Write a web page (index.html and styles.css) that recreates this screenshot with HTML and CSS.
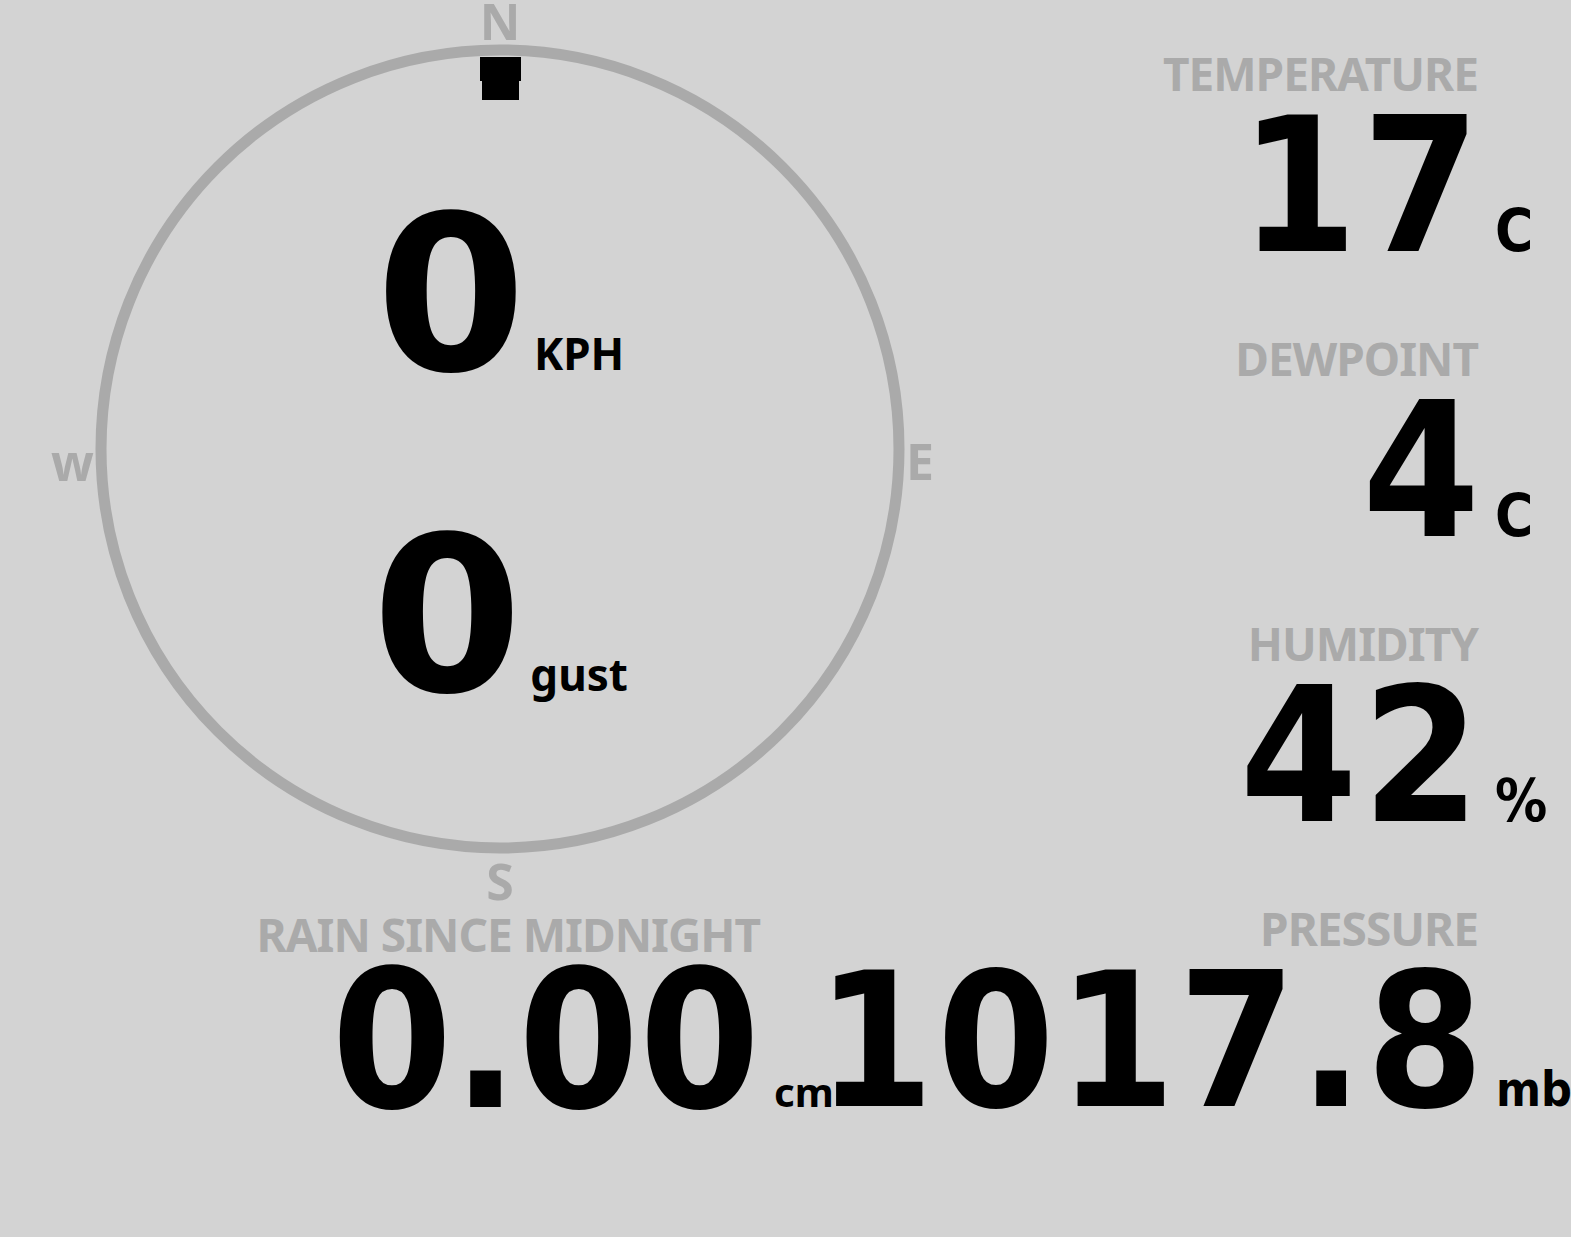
FILE: index.html
```html
<!DOCTYPE html>
<html lang="en">
<head>
    <meta charset="UTF-8">
    <meta name="viewport" content="width=device-width, initial-scale=1.0">
    <title>Weather Station</title>
    <link rel="stylesheet" href="styles.css">
</head>
<body>
    <div class="dashboard">
        <div class="compass">
            <svg class="dial" width="1000" height="900" viewBox="0 0 1000 900">
                <circle cx="500" cy="449" r="399" fill="none" stroke="#aaaaaa" stroke-width="11"/>
                <!-- wind direction pointer, 0 deg -->
                <polygon points="480,57 521,57 521,81 519,81 519,100 482,100 482,81 480,81" fill="#000"/>
            </svg>
            <span class="point point-n">N</span>
            <span class="point point-e">E</span>
            <span class="point point-s">S</span>
            <span class="point point-w">w</span>
            <div class="speeds">
                <div class="speed"><span class="speed-num">0</span><span class="speed-unit">KPH</span></div>
                <div class="speed"><span class="speed-num">0</span><span class="speed-unit">gust</span></div>
            </div>
        </div>

        <div class="reading temp">
            <div class="label">TEMPERATURE</div>
            <div class="value"><span class="num">17</span><span class="unit">C</span></div>
        </div>
        <div class="reading dew">
            <div class="label">DEWPOINT</div>
            <div class="value"><span class="num">4</span><span class="unit">C</span></div>
        </div>
        <div class="reading humidity">
            <div class="label">HUMIDITY</div>
            <div class="value"><span class="num">42</span><span class="unit">%</span></div>
        </div>
        <div class="reading rain">
            <div class="label">RAIN SINCE MIDNIGHT</div>
            <div class="value"><span class="num">0.00</span><span class="unit">cm</span></div>
        </div>
        <div class="reading pressure">
            <div class="label">PRESSURE</div>
            <div class="value"><span class="num">1017.8</span><span class="unit">mb</span></div>
        </div>
    </div>
</body>
</html>
```

FILE: styles.css
```css
body {
    margin: 0;
    background-color: #d3d3d3;
    font-family: "Noto Sans", sans-serif;
    font-weight: bold;
    color: #000;
}
.dashboard {
    display: grid;
    grid-template-columns: 1000px minmax(0, 1fr);
    grid-template-rows: repeat(4, 285px);
}

/* compass */
.compass {
    grid-column: 1;
    grid-row: 1 / span 3;
    position: relative;
}
.dial {
    position: absolute;
    top: 0;
    left: 0;
    overflow: visible;
}
.point {
    position: absolute;
    font-size: 50px;
    line-height: 50px;
    color: #aaaaaa;
}
.point-n {
    top: -4px;
    left: 0;
    width: 1000px;
    text-align: center;
}
.point-s {
    top: 856px;
    left: 0;
    width: 1000px;
    text-align: center;
}
.point-e {
    top: 436px;
    left: 906px;
}
.point-w {
    top: 437px;
    left: 51px;
}
.speeds {
    position: relative;
    display: flex;
    flex-direction: column;
    align-items: center;
    padding-top: 135px;
}
.speed {
    display: flex;
    align-items: baseline;
}
.speed-num {
    font-family: "DejaVu Sans", sans-serif;
    font-size: 216px;
    line-height: 321px;
}
.speed-unit {
    font-size: 44px;
    margin-left: 8px;
}

/* readings */
.reading {
    grid-column: 2;
    min-width: 0;
    padding-top: 50px;
}
.reading .label {
    font-size: 46px;
    line-height: 46px;
    letter-spacing: -1px;
    color: #aaaaaa;
    text-align: right;
    padding-right: 93px;
    white-space: nowrap;
}
.reading .value {
    display: flex;
    justify-content: flex-end;
    align-items: baseline;
    margin-top: 10px;
}
.reading .num {
    font-family: "DejaVu Sans Condensed", "DejaVu Sans", sans-serif;
    font-stretch: condensed;
    font-size: 188px;
    line-height: 160px;
    letter-spacing: 5px;
    white-space: nowrap;
    flex-shrink: 0;
}
.reading .unit {
    font-family: "DejaVu Sans Condensed", "DejaVu Sans", sans-serif;
    font-stretch: condensed;
    font-size: 58px;
    width: 86px;
    padding-left: 10px;
    box-sizing: border-box;
    flex-shrink: 0;
}
.temp { grid-row: 1; }
.dew { grid-row: 2; }
.humidity { grid-row: 3; }
.pressure { grid-row: 4; }
.pressure .num {
    letter-spacing: 3px;
}
.pressure .unit {
    font-size: 48px;
    width: 84px;
    padding-left: 9px;
}
.rain {
    grid-column: 1;
    grid-row: 4;
    width: 840px;
    padding-top: 56px;
}
.rain .label {
    padding-right: 80px;
}
.rain .value {
    margin-top: 4px;
}
.rain .num {
    font-size: 193px;
    letter-spacing: 0;
}
.rain .unit {
    font-family: "Noto Sans", sans-serif;
    font-stretch: normal;
    font-size: 40px;
    width: 80px;
    padding-left: 14px;
}
```
